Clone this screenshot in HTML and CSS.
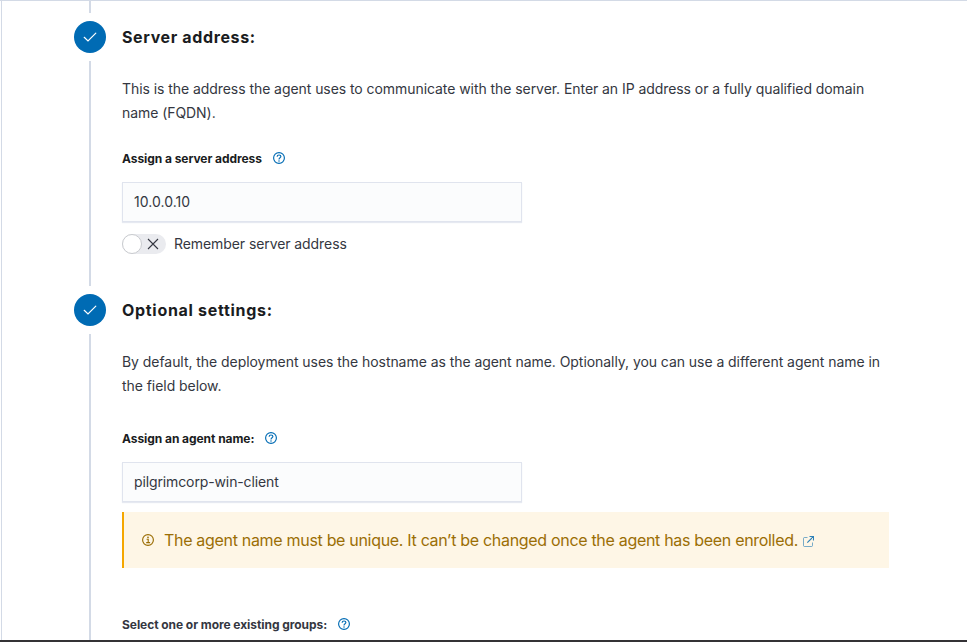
FILE: index.html
```html
<!DOCTYPE html>
<html lang="en">
<head>
<meta charset="utf-8">
<title>Deploy new agent</title>
<link rel="stylesheet" href="styles.css">
</head>
<body>
<svg class="defs" aria-hidden="true">
  <symbol id="check" viewBox="0 0 16 16"><path d="M2.2 8.3 6 12 13.8 4.2" fill="none" stroke="currentColor" stroke-width="1.2" stroke-linecap="round"/></symbol>
  <symbol id="help" viewBox="0 0 12 12"><circle cx="6" cy="6" r="5.4" fill="none" stroke="currentColor" stroke-width="1.15"/><path d="M4.1 4.8C4.2 3.6 4.9 3 6 3s1.9.7 1.9 1.6C7.9 5.8 6 5.8 6 7.4" fill="none" stroke="currentColor" stroke-width="1.15"/><circle cx="6" cy="8.9" r=".75" fill="currentColor"/></symbol>
</svg>
<main class="page">
  <div class="lead"><i class="line"></i></div>
  <section class="step step-address">
    <div class="rail"><span class="badge"><svg><use href="#check"/></svg></span><i class="line"></i></div>
    <div class="content">
      <h2>Server address:</h2>
      <p>This is the address the agent uses to communicate with the server. Enter an IP address or a fully qualified domain name (FQDN).</p>
      <div class="label">Assign a server address <svg class="help"><use href="#help"/></svg></div>
      <input class="field field-address" value="10.0.0.10" aria-label="Server address">
      <div class="remember"><span class="switch"><i class="thumb"></i><svg viewBox="0 0 12 12"><path d="m1 1 10 10M11 1 1 11" stroke="currentColor" stroke-width="1.1"/></svg></span>Remember server address</div>
    </div>
  </section>
  <section class="step step-options">
    <div class="rail"><span class="badge"><svg><use href="#check"/></svg></span><i class="line"></i></div>
    <div class="content">
      <h2>Optional settings:</h2>
      <p>By default, the deployment uses the hostname as the agent name. Optionally, you can use a different agent name in the field below.</p>
      <div class="label label-name">Assign an agent name: <svg class="help"><use href="#help"/></svg></div>
      <input class="field" value="pilgrimcorp-win-client" aria-label="Agent name">
      <div class="callout">
        <svg class="info" viewBox="0 0 12 12"><circle cx="6" cy="6" r="5.4" fill="none" stroke="currentColor" stroke-width="1.15"/><path d="M4.6 5.2H6.2v3.4M4.2 8.6h3.9" fill="none" stroke="currentColor" stroke-width="1.1"/><circle cx="6" cy="3.3" r=".85" fill="currentColor"/></svg>
        <span>The agent name must be unique. It can’t be changed once the agent has been enrolled.</span>
        <svg class="external" viewBox="0 0 11 11"><path d="M4.5 1.5h-3q-1 0-1 1v7q0 1 1 1h7q1 0 1-1v-3" fill="none" stroke="currentColor" opacity=".65"/><path d="M6.5.5h4v4M10.5.5 4.3 6.7" fill="none" stroke="currentColor" stroke-width="1.15"/></svg>
      </div>
      <div class="label label-groups">Select one or more existing groups: <svg class="help"><use href="#help"/></svg></div>
    </div>
  </section>
</main>
</body>
</html>
```

FILE: styles.css
```css
* { box-sizing: border-box; }
body { margin: 0; background: #fff; color: #343741; font: 14px/24px Inter, sans-serif; letter-spacing: -.062px; }
.defs { display: none; }
.page { height: 642px; overflow: hidden; border-top: 1px solid #d3dae6; border-bottom: 2px solid #343235; padding-left: 74px; background: linear-gradient(#d3dae6, #d3dae6) 1px 0 / 1px 100% no-repeat; }
.lead { display: flex; justify-content: center; width: 32px; height: 20px; padding-bottom: 8px; }
.line { width: 2px; background: #d3dae6; }
.step { display: flex; gap: 16px; height: 273px; }
.step-options { height: 346px; }
.rail { display: flex; flex-direction: column; align-items: center; gap: 8px; width: 32px; padding-bottom: 8px; }
.step-options .rail { padding-bottom: 0; }
.rail .line { flex: 1; }
.badge { display: flex; flex: none; align-items: center; justify-content: center; width: 32px; height: 32px; border-radius: 50%; background: #006bb4; color: #fff; }
.badge svg { width: 16px; height: 16px; }
.content { width: 767px; }
h2 { margin: 0; color: #1a1c21; font-size: 16px; font-weight: 700; line-height: 32px; letter-spacing: .63px; }
.step-options h2 { letter-spacing: .7px; }
p { margin: 24px 0 0; }
.step-options p { letter-spacing: -.054px; }
.label { display: flex; align-items: center; height: 18px; margin-top: 24px; padding-top: 1px; color: #1a1c21; font-size: 12px; font-weight: 700; line-height: 18px; letter-spacing: -.06px; }
.label-name { margin-top: 31px; }
.label-groups { margin-top: 47px; color: #343741; }
.help { width: 12px; height: 12px; margin: -1px 0 0 11px; color: #006bb4; }
.field { display: block; width: 400px; height: 40px; margin-top: 15px; padding: 0 11px 2px; border: 1px solid #e0e4ee; border-radius: 0; background: #fbfcfd; box-shadow: 0 1px 1px #e6e9f1; color: #343741; font: 14px Inter, sans-serif; letter-spacing: -.12px; }
.field-address { letter-spacing: .03px; }
.remember { display: flex; align-items: center; gap: 8px; height: 20px; margin-top: 12px; letter-spacing: -.08px; }
.switch { display: flex; align-items: center; gap: 5px; width: 44px; height: 20px; border-radius: 10px; background: #eaebef; }
.switch svg { width: 12px; height: 12px; }
.thumb { width: 20px; height: 20px; border: 1px solid #c9cbcf; border-radius: 50%; background: #fff; }
.callout { display: flex; align-items: center; height: 56px; margin-top: 10px; padding-left: 18px; border-left: 2px solid #f5a700; background: #fef6e6; color: #9b6e05; font-size: 16px; letter-spacing: -.312px; }
.info { width: 12px; height: 12px; margin-right: 10px; }
.external { width: 11px; height: 11px; margin: 3px 0 0 5px; color: #2f82b8; }
```
